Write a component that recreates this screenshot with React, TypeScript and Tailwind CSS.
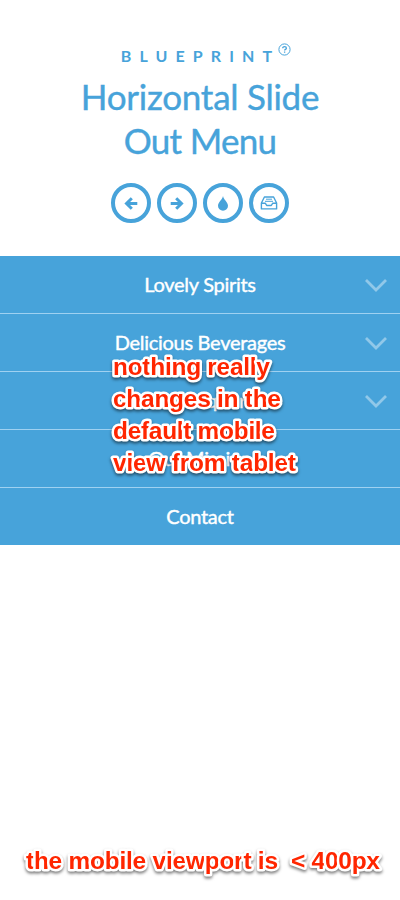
import React from "react";

const menu = [
  { label: "Lovely Spirits", sub: true },
  { label: "Delicious Beverages", sub: true },
  { label: "Our Liquor", sub: true },
  { label: "Our Mission", sub: false },
  { label: "Contact", sub: false },
];

function Circle({ children }: { children: React.ReactNode }) {
  return (
    <a className="flex h-10 w-10 items-center justify-center rounded-full border-4 border-[#47a3da]">
      {children}
    </a>
  );
}

type Line = { text: string; width: number };

function Note({ lines, className }: { lines: Line[]; className: string }) {
  return (
    <svg className={"pointer-events-none absolute overflow-visible drop-shadow-[0_2px_1.5px_rgba(0,0,0,0.5)] " + className}>
      {lines.map((line, i) => (
        <text
          key={line.text}
          x="0"
          y={24 + i * 32}
          textLength={line.width}
          className="fill-[#ff2600] stroke-white font-['Liberation_Sans',Arial,sans-serif] text-[24.5px] font-bold"
          strokeWidth="5"
          strokeLinejoin="round"
          paintOrder="stroke"
          xmlSpace="preserve"
        >
          {line.text}
        </text>
      ))}
    </svg>
  );
}

export default function App() {
  return (
    <div className="relative h-[900px] w-[400px] overflow-hidden bg-white font-[Lato,sans-serif] text-[#47a3da]">
      <header className="flex h-64 flex-col items-center pt-[46px]">
        <div className="relative mr-[7px] h-5 pl-[8px] text-[16px] leading-5 font-bold tracking-[8.1px]">
          BLUEPRINT
          <svg className="absolute top-[-3px] right-[-11px]" width="13" height="13" viewBox="0 0 13 13" fill="none" stroke="currentColor">
            <circle cx="6.5" cy="6.5" r="5.6" />
            <path d="M4.7 5.2c0-2.2 3.7-2.2 3.7 0 0 1.2-1.8 1.2-1.8 2.3M6.6 8.5v1.2" strokeWidth="1.3" />
          </svg>
        </div>
        <h1 className="mt-[8px] text-center text-[35px] leading-[44px] tracking-[-0.25px] [-webkit-text-stroke:0.4px_#47a3da]">
          Horizontal Slide
          <br />
          <span className="tracking-[-0.7px]">Out Menu</span>
        </h1>
        <nav className="mt-[21px] flex gap-[6px]">
          <Circle>
            <svg width="14" height="14" viewBox="0 0 14 14" fill="none" stroke="currentColor" strokeWidth="3">
              <path d="M13.3 7.5H2.5M7.8 2.2 2.5 7.5l5.3 5.3" />
            </svg>
          </Circle>
          <Circle>
            <svg width="14" height="14" viewBox="0 0 14 14" fill="none" stroke="currentColor" strokeWidth="3">
              <path d="M.7 7.5h10.8M6.2 2.2 11.5 7.5l-5.3 5.3" />
            </svg>
          </Circle>
          <Circle>
            <svg width="12" height="16" viewBox="0 0 12 16" fill="currentColor">
              <path d="M6 1c.5 3.4 5 6.2 5 9.7a5 5 0 0 1-10 0C1 7.2 5.5 4.4 6 1z" />
            </svg>
          </Circle>
          <Circle>
            <svg width="18" height="16" viewBox="0 0 18 16" fill="none" stroke="currentColor" strokeWidth="1.4" strokeLinejoin="round">
              <path d="M4.4 2h9.2l3 6v5.9H1.4V8zM1.4 8.3h4l1.3 2.2h4.600l1.3-2.2h4" />
              <path d="M6 4.2h6M5 6.3h8" strokeWidth="1" />
            </svg>
          </Circle>
        </nav>
      </header>
      <ul className="bg-[#47a3da] text-white">
        {menu.map((item, i) => (
          <li
            key={item.label}
            className={"relative flex items-center justify-center pb-[2px] text-[20px] tracking-[-0.28px] [-webkit-text-stroke:0.4px_white] " + (i < 4 ? "h-[58px] border-b border-[#9fd1f1]" : "h-[57px]")}
          >
            <span className="leading-6">{item.label}</span>
            {item.sub && (
              <svg className="absolute top-[22px] right-[13px]" width="22" height="15" viewBox="0 0 22 15" fill="none" stroke="#91c8e9" strokeWidth="2.8">
                <path d="M1 2l10 10L21 2" />
              </svg>
            )}
          </li>
        ))}
      </ul>
      <Note
        lines={[
          { text: "nothing really", width: 157 },
          { text: "changes in the", width: 168 },
          { text: "default mobile", width: 162 },
          { text: "view from tablet", width: 183 },
        ]}
        className="top-[351px] left-[113px] h-[130px] w-[200px]"
      />
      <Note lines={[{ text: "the mobile viewport is  < 400px", width: 354 }]} className="top-[845px] left-[26px] h-[35px] w-[370px]" />
    </div>
  );
}
